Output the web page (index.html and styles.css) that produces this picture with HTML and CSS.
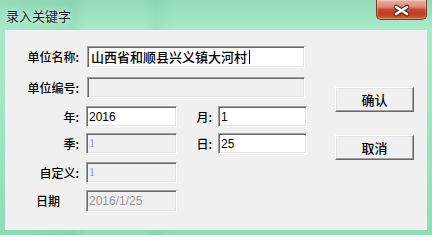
FILE: index.html
```html
<!DOCTYPE html>
<html lang="zh-CN">
<head>
<meta charset="utf-8">
<title>录入关键字</title>
<link rel="stylesheet" href="styles.css">
</head>
<body>
<div class="window">
  <div class="titlebar">
    <span class="title">录入关键字</span>
    <div class="close">
      <svg width="49" height="19" viewBox="0 0 49 19">
        <path d="M19 7 L30 14 M30 7 L19 14" stroke="#3b2a26" stroke-width="4.6" stroke-linecap="round" fill="none" opacity="0.85"/>
        <path d="M19 7 L30 14 M30 7 L19 14" stroke="#ffffff" stroke-width="2.6" stroke-linecap="round" fill="none"/>
      </svg>
    </div>
  </div>
  <div class="client">
    <div class="form">
      <div class="row r1">
        <span class="lbl">单位名称:</span>
        <div class="field wide"><span class="big">山西省和顺县兴义镇大河村</span><span class="caret"></span></div>
      </div>
      <div class="row r2">
        <span class="lbl">单位编号:</span>
        <div class="field wide off"></div>
      </div>
      <div class="row r3">
        <span class="lbl">年:</span>
        <div class="field short">2016</div>
        <span class="lbl2">月:</span>
        <div class="field short2">1</div>
      </div>
      <div class="row r4">
        <span class="lbl">季:</span>
        <div class="field short off serif">1</div>
        <span class="lbl2">日:</span>
        <div class="field short2">25</div>
      </div>
      <div class="row r5">
        <span class="lbl">自定义:</span>
        <div class="field short off serif">1</div>
      </div>
      <div class="row r6">
        <span class="lbl left">日期</span>
        <div class="field short off">2016/1/25</div>
      </div>
    </div>
    <div class="buttons">
      <button class="btn">确认</button>
      <button class="btn">取消</button>
    </div>
  </div>
</div>
</body>
</html>
```
FILE: styles.css
```css
html, body {
  margin: 0;
  padding: 0;
}
body {
  width: 432px;
  height: 235px;
  overflow: hidden;
  font-family: "Noto Sans CJK SC", "Noto Sans", sans-serif;
}
.window {
  width: 432px;
  height: 235px;
  display: flex;
  flex-direction: column;
  background:
    linear-gradient(90deg, rgba(60,150,110,0) 0%, rgba(60,150,110,0.10) 17%, rgba(60,150,110,0) 20%, rgba(60,150,110,0) 33%, rgba(60,150,110,0.08) 36%, rgba(60,150,110,0) 40%, rgba(60,150,110,0) 100%),
    linear-gradient(180deg, #93dbb8 0%, #a6eaca 12%, #a2e8c6 40%, #8cdeb7 100%);
}
.titlebar {
  height: 30px;
  display: flex;
  padding: 0 5px 0 6px;
  flex-shrink: 0;
}
.title {
  margin-top: 7px;
  font-size: 13px;
  line-height: 17px;
  color: #1c1c1c;
  text-shadow: 0 0 6px rgba(255,255,255,0.8), 0 0 2px rgba(255,255,255,0.6);
}
.close {
  margin-left: auto;
  width: 51px;
  height: 20px;
  box-sizing: border-box;
  border: 1px solid #7a3a2c;
  border-top: none;
  border-radius: 0 0 5px 5px;
  background: linear-gradient(180deg, #eab3a6 0%, #dd8a77 35%, #c9482f 50%, #c4391f 75%, #d8623f 100%);
  box-shadow: inset 0 0 0 1px rgba(255,255,255,0.25);
  display: flex;
}
.close svg {
  display: block;
}
.client {
  display: flex;
  margin: 0 5px;
  height: 200px;
  box-sizing: border-box;
  padding-top: 16px;
  background: #f0f0f0;
}
.form {
  display: flex;
  flex-direction: column;
}
.row {
  display: flex;
  align-items: center;
  height: 21px;
}
.r1 { height: 22px; }
.r2 { margin-top: 9px; }
.r3 { margin-top: 8px; }
.r4 { margin-top: 6px; }
.r5 { margin-top: 8px; }
.r6 { margin-top: 7px; height: 22px; }
.lbl {
  width: 74px;
  text-align: right;
  font-size: 12px;
  line-height: 14px;
  font-weight: 500;
  color: #000;
  white-space: nowrap;
}
.lbl.left {
  text-align: left;
  padding-left: 31px;
  box-sizing: border-box;
}
.lbl2 {
  width: 41px;
  box-sizing: border-box;
  padding-right: 6px;
  text-align: right;
  font-size: 12px;
  line-height: 14px;
  font-weight: 500;
  color: #000;
}
.field {
  box-sizing: border-box;
  height: 100%;
  margin-left: 7px;
  padding-left: 2px;
  display: flex;
  align-items: center;
  background: #fff;
  border: 1px solid;
  border-color: #a0a0a0 #ffffff #ffffff #a0a0a0;
  box-shadow: inset 1px 1px 0 #696969, inset -1px -1px 0 #e3e3e3;
  font-family: "Liberation Sans", Arial, sans-serif;
  font-size: 12px;
  color: #000;
  white-space: nowrap;
}
.lbl2 + .field {
  margin-left: 0;
}
.wide {
  width: 218px;
  margin-left: 8px;
}
.short { width: 91px; }
.short2 { width: 89px; }
.off {
  background: #f0f0f0;
  color: #979797;
}
.serif {
  font-family: "Liberation Serif", "Times New Roman", serif;
}
.big {
  font-family: "Noto Sans CJK SC", sans-serif;
  font-size: 13px;
  line-height: 16px;
  font-weight: 500;
  padding-left: 1px;
}
.caret {
  width: 1px;
  height: 14px;
  margin-left: 2px;
  background: #000;
}
.buttons {
  margin-left: auto;
  margin-right: 13px;
  padding-top: 41px;
  display: flex;
  flex-direction: column;
  gap: 23px;
}
.btn {
  width: 79px;
  height: 25px;
  padding: 0;
  margin: 0;
  box-sizing: border-box;
  background: #f0f0f0;
  border: 1px solid;
  border-color: #ffffff #696969 #696969 #ffffff;
  box-shadow: inset -1px -1px 0 #a0a0a0, inset 1px 1px 0 #e3e3e3;
  font-family: "Noto Sans CJK SC", sans-serif;
  font-size: 13px;
  line-height: 16px;
  font-weight: 500;
  color: #000;
}
```
